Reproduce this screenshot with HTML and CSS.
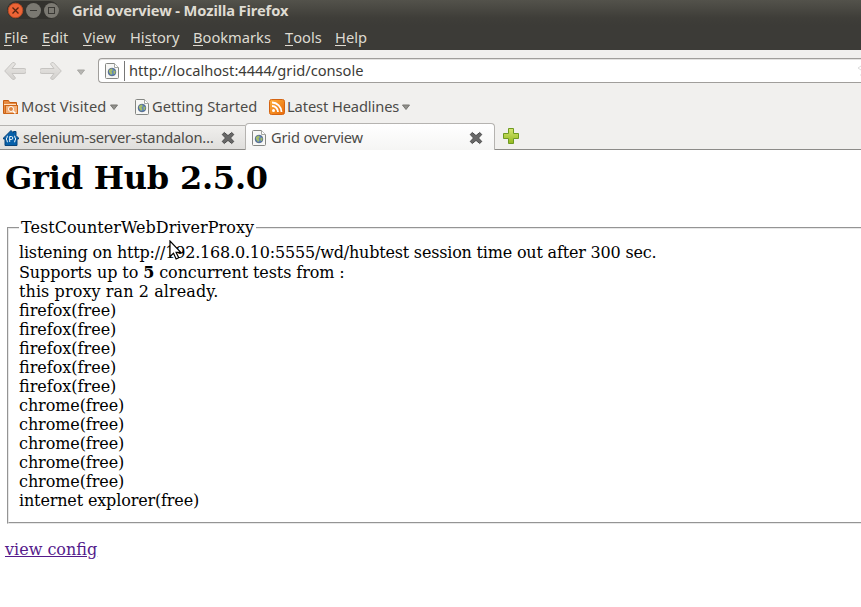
FILE: index.html
```html
<!DOCTYPE html>
<html lang="en">
<head>
<meta charset="utf-8">
<title>Grid overview</title>
<link rel="stylesheet" href="styles.css">
</head>
<body>
<svg width="0" height="0" class="defs">
  <defs>
    <linearGradient id="arrow" x1="0" y1="0" x2="0" y2="1"><stop offset="0" stop-color="#e8e6e3"/><stop offset="1" stop-color="#d3d1ce"/></linearGradient>
    <linearGradient id="feed" x1="0" y1="0" x2="1" y2="1"><stop offset="0" stop-color="#ffb13d"/><stop offset="1" stop-color="#e96a08"/></linearGradient>
    <linearGradient id="plus" x1="0" y1="0" x2="0" y2="1"><stop offset="0" stop-color="#d5e66f"/><stop offset="1" stop-color="#93b91f"/></linearGradient>
    <symbol id="page" viewBox="0 0 14 16">
      <path d="M1.5.5h8l4 4v10a1 1 0 0 1-1 1h-11a1 1 0 0 1-1-1v-13a1 1 0 0 1 1-1z" fill="#f7f7f5" stroke="#858783"/>
      <path d="M9.5.5v4h4" fill="#fff" stroke="#a5a7a3"/>
      <circle cx="7" cy="9" r="3.8" fill="#5c83bd" stroke="#465a78" stroke-width=".8"/>
      <path d="M4 7l2.5-1.5L8 7 6.500 8.500l1 2-1.500 1.500-2-3zM8.500 7.500l2 .5-.5 3-1.500-.5z" fill="#a6bd67"/>
    </symbol>
    <symbol id="close" viewBox="0 0 14 14">
      <path d="M3.3 1.500L7 4.600 10.700 1.500 12.800 3.500 9.500 7 12.800 10.500 10.700 12.500 7 9.400 3.300 12.500 1.200 10.500 4.500 7 1.200 3.500z" fill="#686868" stroke="#4c4c4c"/>
    </symbol>
    <symbol id="drop" viewBox="0 0 8 6"><path d="M.5 1h7L4 5.5z" fill="#92918d" stroke="#777671"/></symbol>
  </defs>
</svg>

<header class="titlebar">
  <div class="controls">
    <svg width="60" height="24" viewBox="0 0 60 24">
      <rect x="1" y="1" width="52" height="18" rx="9" fill="#33322e"/>
      <circle cx="9.500" cy="10.500" r="7.300" fill="#ed6436" stroke="#b34a24"/>
      <path d="M6.500 7.500l6 6M12.500 7.500l-6 6" stroke="#572411" stroke-width="1.300"/>
      <circle cx="27.500" cy="10.500" r="7.500" fill="#7b7972"/>
      <path d="M24 10.500h7" stroke="#393834"/>
      <circle cx="45.500" cy="10.500" r="7.500" fill="#7b7972"/>
      <rect x="42.500" y="7.500" width="6" height="6" fill="none" stroke="#393834"/>
    </svg>
  </div>
  <span class="window-title">Grid overview - Mozilla Firefox</span>
</header>

<nav class="menubar">
  <span class="m-file"><u>F</u>ile</span>
  <span class="m-edit"><u>E</u>dit</span>
  <span class="m-view"><u>V</u>iew</span>
  <span class="m-history">Hi<u>s</u>tory</span>
  <span class="m-bookmarks"><u>B</u>ookmarks</span>
  <span class="m-tools"><u>T</u>ools</span>
  <span class="m-help"><u>H</u>elp</span>
</nav>

<section class="toolbar">
  <svg class="back" width="22" height="18" viewBox="0 0 22 18"><path d="M8.500 .7L.7 9l7.800 8.300q2 1 3-1.300L8 11.500h12a2.500 2.500 0 0 0 0-5H8L11.500 2q-1-2.300-3-1.300z" fill="url(#arrow)" stroke="#c6c4c1"/></svg>
  <svg class="forward" width="22" height="18" viewBox="0 0 22 18"><path transform="matrix(-1 0 0 1 22 0)" d="M8.500 .7L.7 9l7.800 8.300q2 1 3-1.300L8 11.500h12a2.500 2.500 0 0 0 0-5H8L11.500 2q-1-2.300-3-1.300z" fill="url(#arrow)" stroke="#c6c4c1"/></svg>
  <svg class="history-drop" width="8" height="6"><use href="#drop"/></svg>
  <div class="address">
    <svg width="14" height="16"><use href="#page"/></svg>
    <span class="url">http://localhost:4444/grid/console</span>
    <svg class="star" width="3" height="12" viewBox="0 0 3 12"><path d="M3 1L0 3l3 2M2 10h1" fill="none" stroke="#dcdcdc"/></svg>
  </div>
</section>

<section class="bookmarks">
  <div class="bookmark visited">
    <svg width="15" height="16" viewBox="0 0 15 16">
      <path d="M.5 14.500V1.500h5l1 2h7v11z" fill="#e78b42" stroke="#c75d10"/>
      <path d="M1 5.500h12" stroke="#ffe1c2"/><rect x="2.500" y="6.500" width="12" height="8" fill="#f3b079" stroke="#ce6719"/>
      <circle cx="8" cy="10" r="2.500" fill="#dd8640" stroke="#fff"/><path d="M10 12l2.500 2.500" stroke="#fff" stroke-width="1.500"/>
    </svg>
    <span>Most Visited</span>
    <svg class="caret" width="8" height="6"><use href="#drop"/></svg>
  </div>
  <div class="bookmark started">
    <svg width="14" height="16"><use href="#page"/></svg>
    <span>Getting Started</span>
  </div>
  <div class="bookmark headlines">
    <svg width="16" height="16" viewBox="0 0 16 16">
      <rect x=".5" y=".5" width="15" height="15" rx="2" fill="url(#feed)" stroke="#d46412"/>
      <circle cx="4.500" cy="11.500" r="1.500" fill="#fff"/>
      <path d="M3 7a6 6 0 0 1 6 6M3 3.500A9.500 9.500 0 0 1 12.500 13" fill="none" stroke="#fff" stroke-width="1.800"/>
    </svg>
    <span>Latest Headlines</span>
    <svg class="caret" width="8" height="6"><use href="#drop"/></svg>
  </div>
</section>

<section class="tabs">
  <div class="tab inactive">
    <svg width="16" height="16" viewBox="0 0 16 16">
      <path d="M8 .5L10.500 3V1.500H13v4L15.500 8v1H14v6.500H2V9H.5V8z" fill="#0760a9" stroke="#084379"/>
      <path d="M5 6q-1 0-1 1v1l-1 1 1 1v1q0 1 1 1M11 6q1 0 1 1v1l1 1-1 1v1q0 1-1 1M6.700 12V6.500h1.600q1.500 0 1.500 1.500T8.300 9.500H6.700" fill="none" stroke="#fff" stroke-width=".9"/>
    </svg>
    <span class="tab-name">selenium-server-standalon…</span>
    <svg class="tab-close" width="14" height="14"><use href="#close"/></svg>
  </div>
  <div class="tab active">
    <svg width="14" height="16"><use href="#page"/></svg>
    <span class="tab-name">Grid overview</span>
    <svg class="tab-close" width="14" height="14"><use href="#close"/></svg>
  </div>
  <svg class="new-tab" width="16" height="16" viewBox="0 0 16 16"><path d="M5.500.5h5v5h5v5h-5v5h-5v-5h-5v-5h5z" fill="url(#plus)" stroke="#6f9a22"/></svg>
</section>

<main class="page">
  <h1>Grid Hub 2.5.0</h1>
  <fieldset>
    <legend>TestCounterWebDriverProxy</legend>
    <div class="listening">listening on http://192.168.0.10:5555/wd/hubtest session time out after 300 sec.</div>
    <div class="supports">Supports up to <b>5</b> concurrent tests from :</div>
    <div class="ran">this proxy ran 2 already.</div>
    <div>firefox(free)</div>
    <div>firefox(free)</div>
    <div>firefox(free)</div>
    <div>firefox(free)</div>
    <div>firefox(free)</div>
    <div class="chrome">chrome(free)</div>
    <div class="chrome">chrome(free)</div>
    <div class="chrome">chrome(free)</div>
    <div class="chrome">chrome(free)</div>
    <div class="chrome">chrome(free)</div>
    <div class="explorer">internet explorer(free)</div>
  </fieldset>
  <a class="config" href="#">view config</a>
</main>
<svg class="pointer" width="14" height="21" viewBox="0 0 14 21"><path d="M1 1v15.500l3.500-3.300 2.600 5.800 2.600-1.200-2.600-5.500h4.700z" fill="#fff" stroke="#000" stroke-width="1.200"/></svg>
</body>
</html>
```

FILE: styles.css
```css
* { box-sizing: border-box; }
html, body { height: 100%; }
body {
  margin: 0;
  overflow: hidden;
  background: #fff;
  font: 14.67px/20px "Noto Sans", sans-serif;
  color: #3c3b37;
}
svg { display: block; flex: none; }
.defs { position: absolute; }
span { white-space: nowrap; }

.titlebar {
  display: flex;
  height: 25px;
  padding-left: 6px;
  background: linear-gradient(#53524b, #3f3e39 70%, #3c3b37);
}
.controls { width: 66px; }
.window-title {
  font-weight: bold;
  font-size: 14.67px;
  line-height: 20px;
  letter-spacing: -0.1px;
  color: #dfdbd2;
}

.menubar {
  display: flex;
  gap: 14px;
  height: 25px;
  padding: 2px 4px 0;
  background: #3c3b37;
  color: #dfdbd2;
}
.menubar u { text-decoration: none; box-shadow: inset 0 -1px #dfdbd2; display: inline-block; height: 19px; }
.m-file { width: 24px; letter-spacing: 0.2px; }
.m-edit { width: 27px; }
.m-view { width: 33px; letter-spacing: 0.2px; }
.m-history { width: 49px; }
.m-bookmarks { width: 78px; }
.m-tools { width: 36px; }

.toolbar {
  display: flex;
  align-items: center;
  height: 41px;
  padding-left: 4px;
  background: #f1f0ee;
}
.forward { margin-left: 14px; }
.history-drop { margin: 2px 0 0 15px; opacity: .6; }
.address {
  display: flex;
  align-items: center;
  flex: 1;
  height: 25px;
  margin-left: 13px;
  padding-left: 6px;
  border: 1px solid #a09e9b;
  border-right: 0;
  border-radius: 4px 0 0 4px;
  background: #fff;
  box-shadow: inset 0 1px #e4e3e1;
}
.url {
  flex: 1;
  height: 20px;
  line-height: 18px;
  margin-left: 5px;
  padding-left: 4px;
  border-left: 1px solid #777;
}

.bookmarks {
  display: flex;
  align-items: center;
  height: 32px;
  padding-left: 3px;
  background: #f1f0ee;
  color: #4c4b48;
}
.bookmark { display: flex; align-items: center; }
.bookmark span { height: 20px; line-height: 18px; margin-left: 3px; }
.visited { width: 132px; }
.started { width: 134px; }
.visited span { width: 86px; letter-spacing: 0.1px; }
.headlines span { width: 112px; margin-left: 2px; letter-spacing: -0.1px; }
.caret { margin-left: 3px; }

.tabs {
  display: flex;
  align-items: flex-end;
  height: 27px;
  background: linear-gradient(#f1f0ee 26px, #8c8b88 26px);
  color: #4c4b48;
}
.tab {
  display: flex;
  align-items: center;
  border: 1px solid #b5b3b0;
}
.inactive {
  width: 245px;
  height: 25px;
  padding-left: 3px;
  border-left: 0;
  border-right: 0;
  border-bottom-color: #8c8b88;
  background: linear-gradient(#f0efed, #dfdedc);
}
.active {
  width: 250px;
  height: 27px;
  padding: 2px 0 0 6px;
  border-bottom: 0;
  border-radius: 4px 4px 0 0;
  background: linear-gradient(#fff, #f5f5f4);
}
.tab-name { height: 20px; line-height: 19px; margin-left: 4px; letter-spacing: -0.19px; }
.active .tab-name { line-height: 18px; margin-left: 5px; }
.tab-close { margin-left: auto; margin-right: 10px; }
.active .tab-close { margin-right: 11px; }
.new-tab { margin: 0 0 6px 8px; }

.page {
  padding: 10px 0 0 5px;
  font: 16px/19px "DejaVu Serif", serif;
  color: #000;
}
.page h1 { margin: 0; font-size: 32px; line-height: 37px; letter-spacing: -0.22px; }
.page fieldset {
  margin: 21px -4px 0 2px;
  padding: 6px 10px 12px;
  border: 2px groove #e8e8e8;
}
.page legend { padding: 0 2px; letter-spacing: 0.03px; }
.listening { margin-bottom: 1px; letter-spacing: -0.19px; }
.supports { letter-spacing: -0.09px; }
.ran { letter-spacing: 0.09px; }
.chrome { letter-spacing: -0.08px; }
.explorer { letter-spacing: -0.15px; }
.config { display: inline-block; margin-top: 16px; color: #551a8b; }

.pointer { position: absolute; left: 169px; top: 240px; }
```
